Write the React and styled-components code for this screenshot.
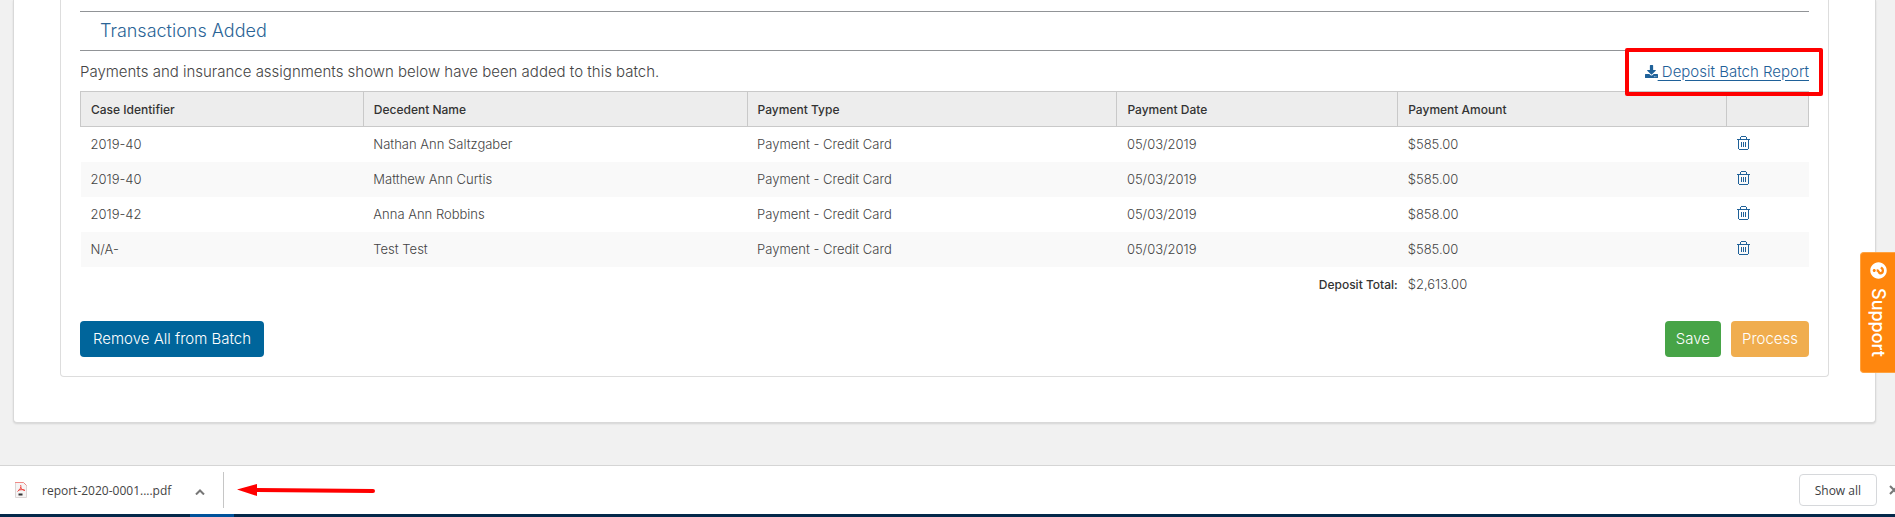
import styled, { createGlobalStyle } from "styled-components";
import { FaDownload, FaQuestionCircle } from "react-icons/fa";

const GlobalStyle = createGlobalStyle`
  * {
    box-sizing: border-box;
  }

  body {
    margin: 0;
    background-color: #f1f1f1;
    color: #444;
    font-family: Inter, "Open Sans", sans-serif;
    font-size: 15px;
    font-weight: 300;
    overflow-x: hidden;
  }
`;

const Tela = styled.div`
  min-height: 100vh;
  display: flex;
  flex-direction: column;
`;

const Card = styled.main`
  margin: 0 19px 0 13px;
  padding: 0 46px 45px;
  background-color: #fff;
  border: 1px solid #d9d9d9;
  border-top: 0;
  border-radius: 0 0 4px 4px;
  box-shadow: 0 1px 2px rgba(0, 0, 0, 0.12);
`;

const Panel = styled.section`
  padding: 11px 19px 19px;
  border: 1px solid #ddd;
  border-top: 0;
  border-radius: 0 0 4px 4px;
`;

const SectionTitle = styled.h2`
  margin: 0;
  padding: 0 20px;
  height: 40px;
  line-height: 38px;
  border-top: 1px solid #919497;
  border-bottom: 1px solid #919497;
  color: #2a6496;
  font-size: 18px;
  font-weight: 300;
`;

const Intro = styled.div`
  display: flex;
  justify-content: space-between;
  align-items: center;
  height: 40px;
`;

const IntroText = styled.p`
  margin: 0;
`;

const ReportLink = styled.a`
  position: relative;
  display: flex;
  align-items: center;
  color: #1f6199;
  text-decoration: none;

  span {
    white-space: pre;
    text-decoration: underline;
    text-underline-offset: 3px;
  }
`;

const Highlight = styled.div`
  position: absolute;
  inset: -14px -14px -15px -20px;
  border: 4px solid #f00;
  border-radius: 2px;
  pointer-events: none;
`;

const Table = styled.table`
  width: 100%;
  table-layout: fixed;
  border-collapse: collapse;
  font-size: 13px;

  tbody tr:nth-child(even) {
    background-color: #f9f9f9;
  }
`;

const Th = styled.th`
  width: ${({ $width }) => $width};
  height: 35px;
  padding: 0 10px;
  background-color: #ededed;
  border: 1px solid #c9c9c9;
  color: #333;
  font-size: 12px;
  font-weight: 500;
  text-align: left;
`;

const Td = styled.td`
  height: 35px;
  padding: 0 10px;
`;

const TotalLabel = styled.th`
  height: 35px;
  padding: 0;
  color: #333;
  font-size: 12px;
  font-weight: 500;
  text-align: right;
`;

const IconButton = styled.button`
  display: block;
  padding: 0;
  border: 0;
  background: none;
  cursor: pointer;
`;

const Actions = styled.div`
  display: flex;
  gap: 10px;
  margin-top: 19px;
`;

const Button = styled.button`
  height: 36px;
  padding: 0 ${({ $push }) => ($push ? "13px" : "11px")};
  margin-right: ${({ $push }) => ($push ? "auto" : "0")};
  border: 0;
  border-radius: 4px;
  background-color: ${({ $color }) => $color};
  color: #fff;
  font: inherit;
  cursor: pointer;
`;

const Support = styled.button`
  position: fixed;
  top: 252px;
  right: 0;
  display: flex;
  align-items: center;
  gap: 9px;
  width: 35px;
  height: 121px;
  padding: 9px 0;
  border: 1px solid #ffa23f;
  border-right: 0;
  border-radius: 4px 0 0 4px;
  background-color: #ff860d;
  color: #fff;
  font-family: inherit;
  font-size: 18px;
  font-weight: 500;
  writing-mode: vertical-rl;
  cursor: pointer;

  svg {
    transform: rotate(90deg);
  }
`;

const Downloads = styled.footer`
  display: flex;
  align-items: center;
  height: 49px;
  margin-top: auto;
  border-top: 1px solid #d5d5d5;
  background-color: #fff;
  font-family: "Open Sans", sans-serif;
  font-size: 12px;
  font-weight: 400;
`;

const FileItem = styled.div`
  display: flex;
  align-items: center;
  gap: 15px;
  height: 36px;
  padding: 0 18px 0 15px;
  border-right: 1px solid #c6c6c6;
`;

const FileName = styled.span`
  margin-right: 9px;
`;

const Arrow = styled.svg`
  margin: 0 auto 0 13px;
`;

const ShowAll = styled.button`
  height: 32px;
  padding: 0 15px;
  border: 1px solid #d6d8db;
  border-radius: 4px;
  background-color: #fff;
  color: #3c4043;
  font: inherit;
  cursor: pointer;
`;

const CloseButton = styled(IconButton)`
  width: 6px;
  margin-left: 12px;
  overflow: hidden;
`;

const Taskbar = styled.div`
  display: flex;
  height: 3px;
  padding-left: 190px;
  background-color: #04284a;
`;

const ActiveTask = styled.div`
  width: 44px;
  background-color: #00529b;
`;

const columns = [
  { label: "Case Identifier", width: 283 },
  { label: "Decedent Name", width: 384 },
  { label: "Payment Type", width: 370 },
  { label: "Payment Date", width: 281 },
  { label: "Payment Amount", width: 329 },
  { label: "", width: 82 },
];

const totalWidth = columns.reduce((sum, column) => sum + column.width, 0);

const transactions = [
  ["2019-40", "Nathan Ann Saltzgaber", "Payment - Credit Card", "05/03/2019", "$585.00"],
  ["2019-40", "Matthew Ann Curtis", "Payment - Credit Card", "05/03/2019", "$585.00"],
  ["2019-42", "Anna Ann Robbins", "Payment - Credit Card", "05/03/2019", "$858.00"],
  ["N/A-", "Test Test", "Payment - Credit Card", "05/03/2019", "$585.00"],
];

function TrashIcon() {
  return (
    <svg width="13" height="14" viewBox="0 0 13 14" fill="#1f6199" shapeRendering="crispEdges">
      <path d="M4 0h5v1H4zM3 1h1v2H3zM9 1h1v2H9zM0 3h13v1H0z" />
      <path d="M1 4h1v9H1zM11 4h1v9h-1zM2 13h9v1H2z" />
      <path d="M4 6h1v5H4zM6 6h1v5H6zM8 6h1v5H8z" />
    </svg>
  );
}

function PdfIcon() {
  return (
    <svg width="12" height="16" viewBox="0 0 12 16" fill="none">
      <path d="M.5.5h8l3 3v12H.5z" fill="#f6f4f4" stroke="#dcd6d6" />
      <path d="M0 .5h8.500l3 3" stroke="#f08a87" />
      <path d="M5.500 3c1 2 0 4-3 6.500M5.500 5c1 2 2 3 4.500 3.500M3 8.500c2-1 4-1 6.500-.5" stroke="#ee3f3a" />
      <path d="M3.500 12.500h4" stroke="#333" strokeWidth="2" />
    </svg>
  );
}

export default function App() {
  return (
    <>
      <GlobalStyle />
      <Tela>
        <Card>
          <Panel>
            <SectionTitle>Transactions Added</SectionTitle>
            <Intro>
              <IntroText>
                Payments and insurance assignments shown below have been added to this batch.
              </IntroText>
              <ReportLink href="#report">
                <FaDownload size={13} />
                <span> Deposit Batch Report</span>
                <Highlight />
              </ReportLink>
            </Intro>
            <Table>
              <thead>
                <tr>
                  {columns.map((column) => (
                    <Th
                      key={column.label}
                      $width={`${(column.width / totalWidth) * 100}%`}
                    >
                      {column.label}
                    </Th>
                  ))}
                </tr>
              </thead>
              <tbody>
                {transactions.map((cells, i) => (
                  <tr key={i}>
                    {cells.map((cell, j) => (
                      <Td key={j}>{cell}</Td>
                    ))}
                    <Td>
                      <IconButton aria-label={`Remove ${cells[1]}`}>
                        <TrashIcon />
                      </IconButton>
                    </Td>
                  </tr>
                ))}
              </tbody>
              <tfoot>
                <tr>
                  <TotalLabel colSpan={4} scope="row">
                    Deposit Total:
                  </TotalLabel>
                  <Td colSpan={2}>$2,613.00</Td>
                </tr>
              </tfoot>
            </Table>
            <Actions>
              <Button $color="#00659b" $push>
                Remove All from Batch
              </Button>
              <Button $color="#47a447">Save</Button>
              <Button $color="#f0ad4e">Process</Button>
            </Actions>
          </Panel>
        </Card>
        <Downloads>
          <FileItem>
            <PdfIcon />
            <FileName>report-2020-0001....pdf</FileName>
            <IconButton aria-label="File options">
              <svg width="10" height="6" viewBox="0 0 10 6" fill="none" stroke="#777" strokeWidth="2">
                <path d="M1 5.500l4-4 4 4" />
              </svg>
            </IconButton>
          </FileItem>
          <Arrow width="138" height="12" viewBox="0 0 138 12" fill="#f00">
            <path d="M0 5.500L20 0v4l116 1q2 0 2 2t-2 2L20 8v4z" />
          </Arrow>
          <ShowAll>Show all</ShowAll>
          <CloseButton aria-label="Close downloads">
            <svg width="10" height="10" viewBox="0 0 10 10" stroke="#777" strokeWidth="2">
              <path d="M1 1l8 8M9 1L1 9" />
            </svg>
          </CloseButton>
        </Downloads>
        <Taskbar>
          <ActiveTask />
        </Taskbar>
      </Tela>
      <Support>
        <FaQuestionCircle size={17} />
        Support
      </Support>
    </>
  );
}
